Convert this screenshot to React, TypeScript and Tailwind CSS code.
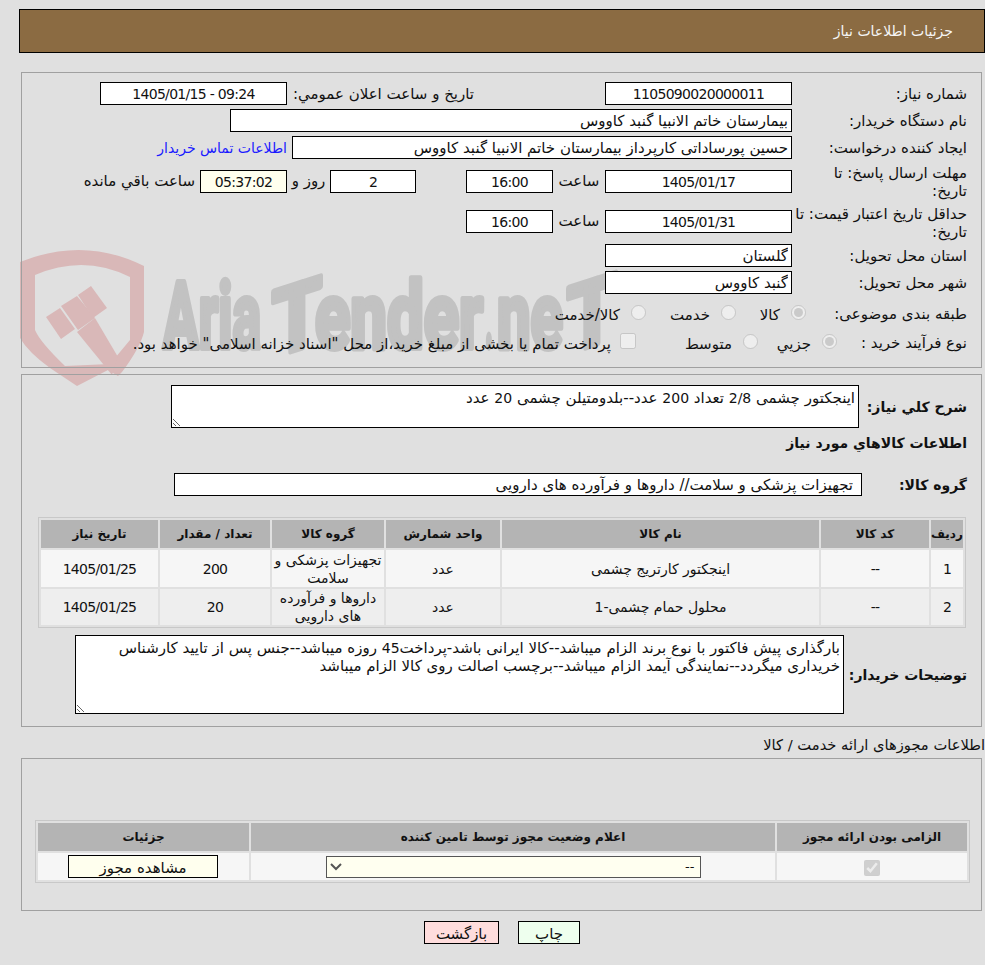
import React from "react";

const inputBase = "block h-[23px] border border-black px-[3px] text-[#111] outline-none font-['DejaVu_Sans',sans-serif]";
const numInput = inputBase + " text-center text-[14px] tracking-[-0.7px]";
const faInput = inputBase + " bg-white text-right text-[15px]";

function N({ children }: { children: React.ReactNode }) {
  return <span className="text-[14px] tracking-[-0.7px]">{children}</span>;
}

function Watermark() {
  return (
    <svg className="absolute left-0 top-0 z-0" width="985" height="400" viewBox="0 0 985 400">
      <g fill="#d9b8b8">
        <path fillRule="evenodd" d="M20 262 Q84 236 144 266 L144 332 Q140 348 122 372 L118 376 L108 370 L77 386 L50 368 Q28 352 20 338 Z M35 275 L35 330 Q40 342 65 366 L110 364 L130 340 L130 277 Q84 254 35 275 Z" />
        <path d="M46 317 L60 308 L75 329 L61 339 Z" />
        <path d="M61 306 L77 296 L95 318 L78 330 Z" />
        <path d="M78 295 L91 286 L107 308 L93 318 Z" />
        <path d="M77 332 L95 318 L118 357 L112 375 Z" />
      </g>
      <g fill="#c2c2c2" stroke="#c2c2c2" strokeWidth="6" strokeLinejoin="round" className="font-['Roboto',sans-serif] font-bold" fontSize="92">
        <text direction="ltr" x="163" y="348" textLength="98" lengthAdjust="spacingAndGlyphs">Aria</text>
        <text direction="ltr" x="272" y="348" textLength="50" lengthAdjust="spacingAndGlyphs" transform="translate(0 98) skewY(-18)">T</text>
        <text direction="ltr" x="315" y="348" textLength="168" lengthAdjust="spacingAndGlyphs">ender</text>
        <text direction="ltr" x="485" y="348" textLength="8" lengthAdjust="spacingAndGlyphs">.</text>
        <text direction="ltr" x="497" y="348" textLength="66" lengthAdjust="spacingAndGlyphs">ne</text>
        <text direction="ltr" x="567" y="348" textLength="50" lengthAdjust="spacingAndGlyphs" transform="translate(0 190) skewY(-18)">T</text>
      </g>
    </svg>
  );
}

function Radio({ checked, name }: { checked?: boolean; name: string }) {
  return <input type="radio" disabled defaultChecked={checked} name={name} className="m-0 mb-[4px] block h-[15px] w-[15px]" />;
}

export default function App() {
  return (
    <div dir="rtl" className="relative h-[965px] w-[985px] overflow-hidden bg-[#e0e0e0] pt-[9px] font-['DejaVu_Sans',sans-serif] text-[15px] leading-[18px] text-[#111]">
      <Watermark />
      <div className="relative z-10">
        <div className="ml-[19px] flex h-[44px] items-center border border-black bg-[#8b6b42] pr-[31px] text-[14px] text-[#f5f5f5]">جزئیات اطلاعات نیاز</div>

        <section className="ml-[21px] mr-[3px] mt-[19px] h-[296px] border border-[#a0a0a0] pr-[14px] pt-[9px]">
          <div className="flex h-[23px] items-center">
            <div className="w-[175px]">شماره نیاز:</div>
            <input readOnly defaultValue="1105090020000011" className={numInput + " w-[187px] bg-white"} />
            <div className="mr-[131px] w-[187px]">تاریخ و ساعت اعلان عمومي:</div>
            <input readOnly defaultValue="09:24 - 1405/01/15" className={numInput + " w-[187px] bg-white"} />
          </div>
          <div className="mt-[4px] flex h-[23px] items-center">
            <div className="w-[175px]">نام دستگاه خریدار:</div>
            <input readOnly defaultValue="بیمارستان خاتم الانبیا گنبد کاووس" className={faInput + " w-[562px]"} />
          </div>
          <div className="mt-[4px] flex h-[23px] items-center">
            <div className="w-[175px]">ایجاد کننده درخواست:</div>
            <input readOnly defaultValue="حسین پورساداتی کارپرداز بیمارستان خاتم الانبیا گنبد کاووس" className={faInput + " w-[500px]"} />
            <a className="mr-[5px] whitespace-nowrap text-[14px] text-[#1a1aff]">اطلاعات تماس خریدار</a>
          </div>
          <div className="mt-[11px] flex h-[40px] items-start">
            <div className="-mt-[6px] w-[175px]">مهلت ارسال پاسخ: تا<br />تاریخ:</div>
            <input readOnly defaultValue="1405/01/17" className={numInput + " w-[187px] bg-white"} />
            <div className="h-[23px] w-[52px] text-center leading-[23px]">ساعت</div>
            <input readOnly defaultValue="16:00" className={numInput + " w-[87px] bg-white"} />
            <input readOnly defaultValue="2" className={numInput + " mr-[50px] w-[86px] bg-white"} />
            <div className="h-[23px] w-[43px] text-center leading-[23px]">روز و</div>
            <input readOnly defaultValue="05:37:02" className={numInput + " w-[87px] bg-[#ffffee]"} />
            <div className="mr-[5px] h-[23px] whitespace-nowrap leading-[23px]">ساعت باقي مانده</div>
          </div>
          <div className="flex h-[34px] items-start">
            <div className="-mt-[5px] w-[175px] whitespace-nowrap">حداقل تاریخ اعتبار قیمت: تا<br />تاریخ:</div>
            <input readOnly defaultValue="1405/01/31" className={numInput + " w-[187px] bg-white"} />
            <div className="h-[23px] w-[52px] text-center leading-[23px]">ساعت</div>
            <input readOnly defaultValue="16:00" className={numInput + " w-[87px] bg-white"} />
          </div>
          <div className="flex h-[23px] items-center">
            <div className="w-[175px]">استان محل تحویل:</div>
            <input readOnly defaultValue="گلستان" className={faInput + " w-[187px]"} />
          </div>
          <div className="mt-[4px] flex h-[23px] items-center">
            <div className="w-[175px]">شهر محل تحویل:</div>
            <input readOnly defaultValue="گنبد کاووس" className={faInput + " w-[187px]"} />
          </div>
          <div className="mt-[9px] flex h-[22px] items-center">
            <div className="w-[161px]">طبقه بندی موضوعی:</div>
            <Radio name="k" checked />
            <div className="mr-[11px] mt-[2px] w-[44px]">کالا</div>
            <Radio name="k" />
            <div className="mr-[11px] mt-[2px] w-[64px]">خدمت</div>
            <Radio name="k" />
            <div className="mr-[11px] mt-[2px]">کالا/خدمت</div>
          </div>
          <div className="mt-[7px] flex h-[22px] items-center">
            <div className="w-[130px]">نوع فرآیند خرید :</div>
            <Radio name="f" checked />
            <div className="mr-[11px] mt-[2px] w-[53px]">جزیي</div>
            <Radio name="f" />
            <div className="mr-[11px] mt-[2px] w-[96px]">متوسط</div>
            <input type="checkbox" disabled className="m-0 mb-[4px] block h-[16px] w-[16px]" />
            <div className="mr-[9px] mt-[2px] whitespace-nowrap">پرداخت تمام یا بخشی از مبلغ خرید،از محل "اسناد خزانه اسلامی" خواهد بود.</div>
          </div>
        </section>

        <section className="ml-[21px] mr-[3px] mt-[6px] h-[353px] border border-[#a0a0a0] pr-[14px] pt-[10px]">
          <div className="flex h-[43px] items-center">
            <div className="w-[108px] text-[14px] font-bold">شرح کلي نياز:</div>
            <div className="h-[43px] w-[688px] resize overflow-auto border border-black bg-white px-[3px] py-[3px]">اینجکتور چشمی <N>2/8</N> تعداد <N>200</N> عدد--بلدومتیلن چشمی <N>20</N> عدد</div>
          </div>
          <div className="mt-[6px] h-[18px] text-[14px] font-bold">اطلاعات کالاهاي مورد نياز</div>
          <div className="mt-[21px] flex h-[23px] items-center">
            <div className="w-[105px] text-[14px] font-bold">گروه کالا:</div>
            <input readOnly defaultValue="تجهیزات پزشکی و سلامت// داروها و فرآورده های دارویی" className={inputBase + " w-[688px] bg-white pr-[8px] text-right text-[15px]"} />
          </div>
          <table className="mr-px mt-[21px] w-[928px] table-fixed border-separate border-spacing-[2px] border border-[#c8c8c8] text-center text-[14px]">
            <colgroup>
              <col className="w-[32px]" /><col className="w-[108px]" /><col className="w-[317px]" /><col className="w-[114px]" /><col className="w-[112px]" /><col className="w-[110px]" /><col className="w-[117px]" />
            </colgroup>
            <thead>
              <tr className="h-[28px] bg-[#b4b4b4] text-[12px] font-bold">
                <th>ردیف</th><th>کد کالا</th><th>نام کالا</th><th>واحد شمارش</th><th>گروه کالا</th><th>تعداد / مقدار</th><th>تاریخ نیاز</th>
              </tr>
            </thead>
            <tbody>
              <tr className="h-[37px] bg-[#f6f6f6]">
                <td><N>1</N></td><td><N>--</N></td><td>اینجکتور کارتریج چشمی</td><td>عدد</td><td>تجهیزات پزشکی و سلامت</td><td><N>200</N></td><td><N>1405/01/25</N></td>
              </tr>
              <tr className="h-[36px] bg-[#eeeeee]">
                <td><N>2</N></td><td><N>--</N></td><td>محلول حمام چشمی-<N>1</N></td><td>عدد</td><td>داروها و فرآورده های دارویی</td><td><N>20</N></td><td><N>1405/01/25</N></td>
              </tr>
            </tbody>
          </table>
          <div className="mt-[7px] flex h-[79px] items-center">
            <div className="w-[123px] text-[14px] font-bold">توضیحات خریدار:</div>
            <div className="h-[79px] w-[769px] resize overflow-auto border border-black bg-white px-[3px] py-[3px]">بارگذاری پیش فاکتور با نوع برند الزام میباشد--کالا ایرانی باشد-پرداخت<N>45</N> روزه میباشد--جنس پس از تایید کارشناس خریداری میگردد--نمایندگی آیمد الزام میباشد--برچسب اصالت روی کالا الزام میباشد</div>
          </div>
        </section>

        <div className="mt-[7px] h-[24px] text-[14.7px] leading-[22px]">اطلاعات مجوزهای ارائه خدمت / کالا</div>

        <section className="ml-[21px] mr-[3px] h-[153px] border border-[#a0a0a0] pr-[11px] pt-[61px]">
          <table className="w-[935px] table-fixed border-separate border-spacing-[2px] border border-[#c8c8c8] text-center text-[14px]">
            <colgroup>
              <col className="w-[190px]" /><col className="w-[524px]" /><col className="w-[211px]" />
            </colgroup>
            <thead>
              <tr className="h-[28px] bg-[#b4b4b4] text-[12px] font-bold">
                <th>الزامی بودن ارائه مجوز</th><th>اعلام وضعیت مجوز توسط تامین کننده</th><th>جزئیات</th>
              </tr>
            </thead>
            <tbody>
              <tr className="h-[27px] bg-[#f6f6f6]">
                <td><input type="checkbox" disabled defaultChecked className="m-0 inline-block h-[16px] w-[16px] align-middle" /></td>
                <td>
                  <div className="relative mx-auto h-[22px] w-[375px]">
                    <select disabled className="block h-[22px] w-full appearance-none border border-[#555] bg-[#fffff0] px-[5px] text-[13px] opacity-100">
                      <option>--</option>
                    </select>
                    <svg className="absolute left-[4px] top-[7px]" width="12" height="8" viewBox="0 0 12 8" fill="none" stroke="#555" strokeWidth="2"><path d="M1 1 L6 6 L11 1" /></svg>
                  </div>
                </td>
                <td>
                  <button className="mr-[31px] block h-[23px] w-[150px] border border-black bg-[#ffffee] pt-[2px] text-[15px]">مشاهده مجوز</button>
                </td>
              </tr>
            </tbody>
          </table>
        </section>

        <div className="ml-[19px] mt-[10px] flex justify-center gap-[19px]">
          <button className="h-[23px] w-[62px] border border-black bg-[#eeffee] pt-[2px]">چاپ</button>
          <button className="h-[23px] w-[75px] border border-black bg-[#ffdddd] pt-[2px]">بازگشت</button>
        </div>
      </div>
    </div>
  );
}
